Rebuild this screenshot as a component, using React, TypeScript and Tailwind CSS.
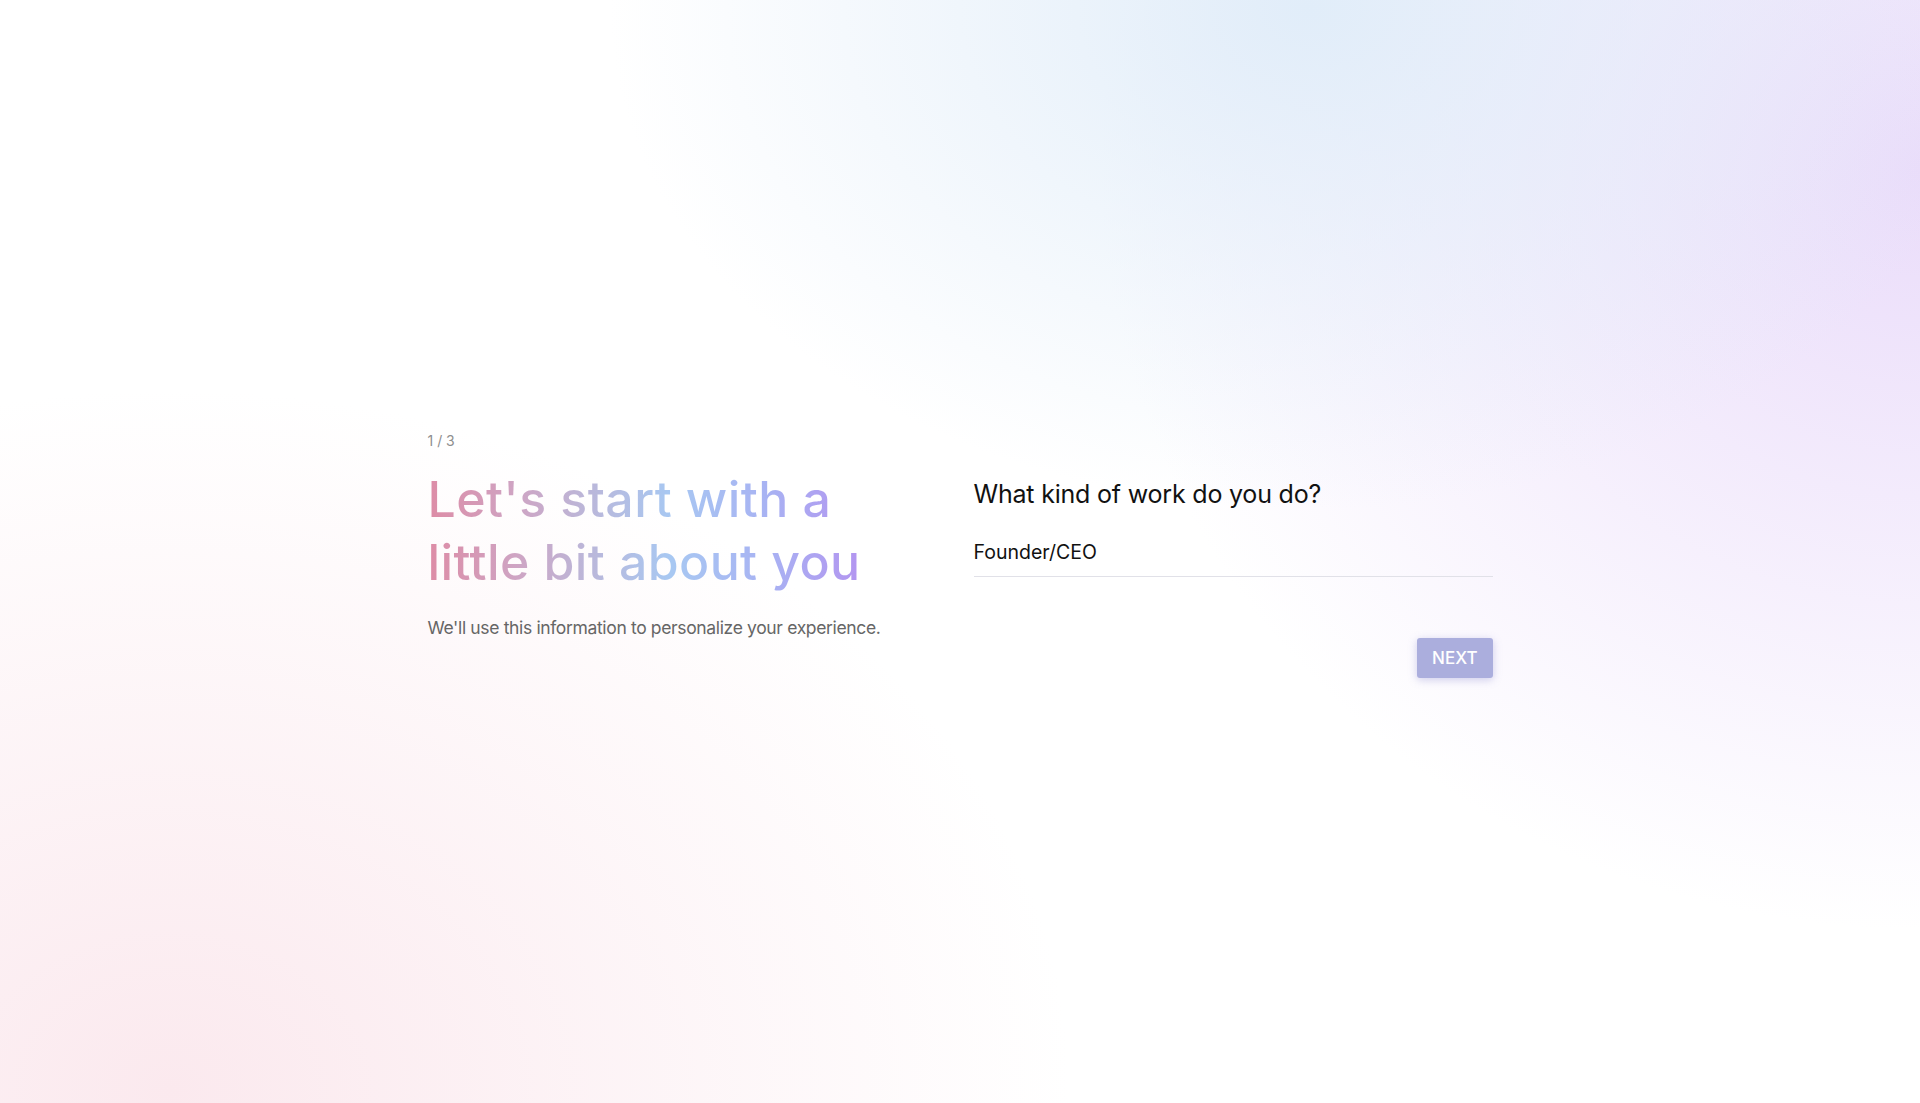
import { useState } from "react";

export default function App() {
  const [role, setRole] = useState("Founder/CEO");

  return (
    <div className="relative h-[1103px] w-full overflow-hidden bg-white bg-[radial-gradient(ellipse_700px_500px_at_1310px_10px,#e1edf9_0%,rgba(225,237,249,0)_100%),radial-gradient(ellipse_820px_760px_at_1920px_170px,#eadcfa_0%,rgba(234,220,250,0)_100%),radial-gradient(ellipse_900px_700px_at_170px_1090px,#fbe9ee_0%,rgba(251,233,238,0)_100%)] font-['Inter',sans-serif]">
      <div className="flex h-full items-center justify-center pt-[6px]">
        <div className="flex w-[1065px] items-start justify-between">
          {/* left: step + intro */}
          <div className="w-[480px]">
            <p className="text-[14px] leading-[20px] text-[#8e8e8e]">1 / 3</p>
            <h1 className="mt-[17px] w-fit bg-[linear-gradient(90deg,#dd8ca6_0%,#cfa4c3_20%,#bcb6d8_36%,#a8c8f2_56%,#a8b3f3_78%,#b395f0_100%)] bg-clip-text text-[50px] font-medium leading-[63px] tracking-[0.4px] text-transparent">
              Let's start with a
              <br />
              little bit about you
            </h1>
            <p className="mt-[22px] text-[17.5px] leading-[24px] tracking-[-0.35px] text-[#666666]">
              We'll use this information to personalize your experience.
            </p>
          </div>

          {/* right: question form */}
          <div className="mt-[47px] w-[519px]">
            <h2 className="text-[25px] font-normal leading-[32px] tracking-[-0.2px] text-[#111111]">
              What kind of work do you do?
            </h2>
            <div className="mt-[28px] border-b border-[#e1e1e8] pb-[10px]">
              <input
                value={role}
                onChange={(e) => setRole(e.target.value)}
                className="block w-full bg-transparent text-[19.5px] leading-[28px] text-[#111111] outline-none"
              />
            </div>
            <div className="mt-[61px] flex justify-end">
              <button className="h-[40px] rounded-[3px] bg-[#abaedd] px-[15px] text-[17px] font-medium leading-[40px] text-white shadow-[0_2px_8px_rgba(120,120,200,0.35)]">
                NEXT
              </button>
            </div>
          </div>
        </div>
      </div>
    </div>
  );
}
